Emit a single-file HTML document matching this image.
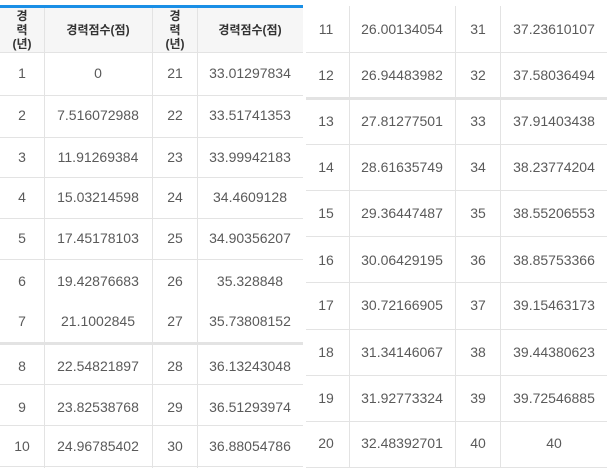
<!DOCTYPE html><html><head><meta charset="utf-8"><style>
body{margin:0;width:612px;height:468px;background:#fff;position:relative;overflow:hidden;font-family:"Liberation Sans","Noto Sans CJK KR",sans-serif;}
.h{position:absolute;height:1px;background:#e3e3e3}
.v{position:absolute;width:1px;background:#e3e3e3}
.t{position:absolute;transform:translate(-50%,-50%);font-size:14px;color:#5a5a5a;white-space:nowrap}
.hd{position:absolute;transform:translate(-50%,-50%);font-size:12px;font-weight:bold;color:#333;text-align:center;line-height:14px;white-space:nowrap}
</style></head><body>
<div style="position:absolute;left:0;top:8px;width:303px;height:44px;background:#f6f6f6"></div>
<div style="position:absolute;left:0;top:5px;width:303px;height:3px;background:#1a8fe6"></div>
<div class="hd" style="left:22px;top:30px">경<br>력<br>(년)</div>
<div class="hd" style="left:98px;top:30px">경력점수(점)</div>
<div class="hd" style="left:175px;top:30px">경<br>력<br>(년)</div>
<div class="hd" style="left:250px;top:30px">경력점수(점)</div>
<div class="v" style="left:44px;top:8px;height:460px"></div>
<div class="v" style="left:152px;top:8px;height:460px"></div>
<div class="v" style="left:197px;top:8px;height:460px"></div>
<div class="v" style="left:349px;top:6px;height:462px"></div>
<div class="v" style="left:455px;top:6px;height:462px"></div>
<div class="v" style="left:500px;top:6px;height:462px"></div>
<div class="h" style="left:0;width:303px;top:52px"></div>
<div class="h" style="left:0;width:303px;top:95px"></div>
<div class="h" style="left:0;width:303px;top:137px"></div>
<div class="h" style="left:0;width:303px;top:177px"></div>
<div class="h" style="left:0;width:303px;top:218px"></div>
<div class="h" style="left:0;width:303px;top:259px"></div>
<div class="h" style="left:0;width:303px;top:342px;height:3px"></div>
<div class="h" style="left:0;width:303px;top:384px"></div>
<div class="h" style="left:0;width:303px;top:425px"></div>
<div class="h" style="left:0;width:303px;top:466px"></div>
<div class="h" style="left:306px;width:301px;top:52px"></div>
<div class="h" style="left:306px;width:301px;top:97px;height:3px"></div>
<div class="h" style="left:306px;width:301px;top:144px"></div>
<div class="h" style="left:306px;width:301px;top:190px"></div>
<div class="h" style="left:306px;width:301px;top:236px"></div>
<div class="h" style="left:306px;width:301px;top:282px"></div>
<div class="h" style="left:306px;width:301px;top:329px"></div>
<div class="h" style="left:306px;width:301px;top:375px"></div>
<div class="h" style="left:306px;width:301px;top:421px"></div>
<div class="h" style="left:306px;width:301px;top:467px"></div>

<div class="t" style="left:22px;top:73px">1</div><div class="t" style="left:98px;top:73px">0</div><div class="t" style="left:175px;top:73px">21</div><div class="t" style="left:250px;top:73px">33.01297834</div>
<div class="t" style="left:22px;top:115px">2</div><div class="t" style="left:98px;top:115px">7.516072988</div><div class="t" style="left:175px;top:115px">22</div><div class="t" style="left:250px;top:115px">33.51741353</div>
<div class="t" style="left:22px;top:157px">3</div><div class="t" style="left:98px;top:157px">11.91269384</div><div class="t" style="left:175px;top:157px">23</div><div class="t" style="left:250px;top:157px">33.99942183</div>
<div class="t" style="left:22px;top:197px">4</div><div class="t" style="left:98px;top:197px">15.03214598</div><div class="t" style="left:175px;top:197px">24</div><div class="t" style="left:250px;top:197px">34.4609128</div>
<div class="t" style="left:22px;top:238px">5</div><div class="t" style="left:98px;top:238px">17.45178103</div><div class="t" style="left:175px;top:238px">25</div><div class="t" style="left:250px;top:238px">34.90356207</div>
<div class="t" style="left:22px;top:281px">6</div><div class="t" style="left:98px;top:281px">19.42876683</div><div class="t" style="left:175px;top:281px">26</div><div class="t" style="left:250px;top:281px">35.328848</div>
<div class="t" style="left:22px;top:321px">7</div><div class="t" style="left:98px;top:321px">21.1002845</div><div class="t" style="left:175px;top:321px">27</div><div class="t" style="left:250px;top:321px">35.73808152</div>
<div class="t" style="left:22px;top:366px">8</div><div class="t" style="left:98px;top:366px">22.54821897</div><div class="t" style="left:175px;top:366px">28</div><div class="t" style="left:250px;top:366px">36.13243048</div>
<div class="t" style="left:22px;top:407px">9</div><div class="t" style="left:98px;top:407px">23.82538768</div><div class="t" style="left:175px;top:407px">29</div><div class="t" style="left:250px;top:407px">36.51293974</div>
<div class="t" style="left:22px;top:446px">10</div><div class="t" style="left:98px;top:446px">24.96785402</div><div class="t" style="left:175px;top:446px">30</div><div class="t" style="left:250px;top:446px">36.88054786</div>

<div class="t" style="left:326px;top:29px">11</div><div class="t" style="left:402px;top:29px">26.00134054</div><div class="t" style="left:478px;top:29px">31</div><div class="t" style="left:554px;top:29px">37.23610107</div>
<div class="t" style="left:326px;top:75px">12</div><div class="t" style="left:402px;top:75px">26.94483982</div><div class="t" style="left:478px;top:75px">32</div><div class="t" style="left:554px;top:75px">37.58036494</div>
<div class="t" style="left:326px;top:121px">13</div><div class="t" style="left:402px;top:121px">27.81277501</div><div class="t" style="left:478px;top:121px">33</div><div class="t" style="left:554px;top:121px">37.91403438</div>
<div class="t" style="left:326px;top:167px">14</div><div class="t" style="left:402px;top:167px">28.61635749</div><div class="t" style="left:478px;top:167px">34</div><div class="t" style="left:554px;top:167px">38.23774204</div>
<div class="t" style="left:326px;top:213px">15</div><div class="t" style="left:402px;top:213px">29.36447487</div><div class="t" style="left:478px;top:213px">35</div><div class="t" style="left:554px;top:213px">38.55206553</div>
<div class="t" style="left:326px;top:260px">16</div><div class="t" style="left:402px;top:260px">30.06429195</div><div class="t" style="left:478px;top:260px">36</div><div class="t" style="left:554px;top:260px">38.85753366</div>
<div class="t" style="left:326px;top:305px">17</div><div class="t" style="left:402px;top:305px">30.72166905</div><div class="t" style="left:478px;top:305px">37</div><div class="t" style="left:554px;top:305px">39.15463173</div>
<div class="t" style="left:326px;top:352px">18</div><div class="t" style="left:402px;top:352px">31.34146067</div><div class="t" style="left:478px;top:352px">38</div><div class="t" style="left:554px;top:352px">39.44380623</div>
<div class="t" style="left:326px;top:398px">19</div><div class="t" style="left:402px;top:398px">31.92773324</div><div class="t" style="left:478px;top:398px">39</div><div class="t" style="left:554px;top:398px">39.72546885</div>
<div class="t" style="left:326px;top:443px">20</div><div class="t" style="left:402px;top:443px">32.48392701</div><div class="t" style="left:478px;top:443px">40</div><div class="t" style="left:554px;top:443px">40</div>
</body></html>
